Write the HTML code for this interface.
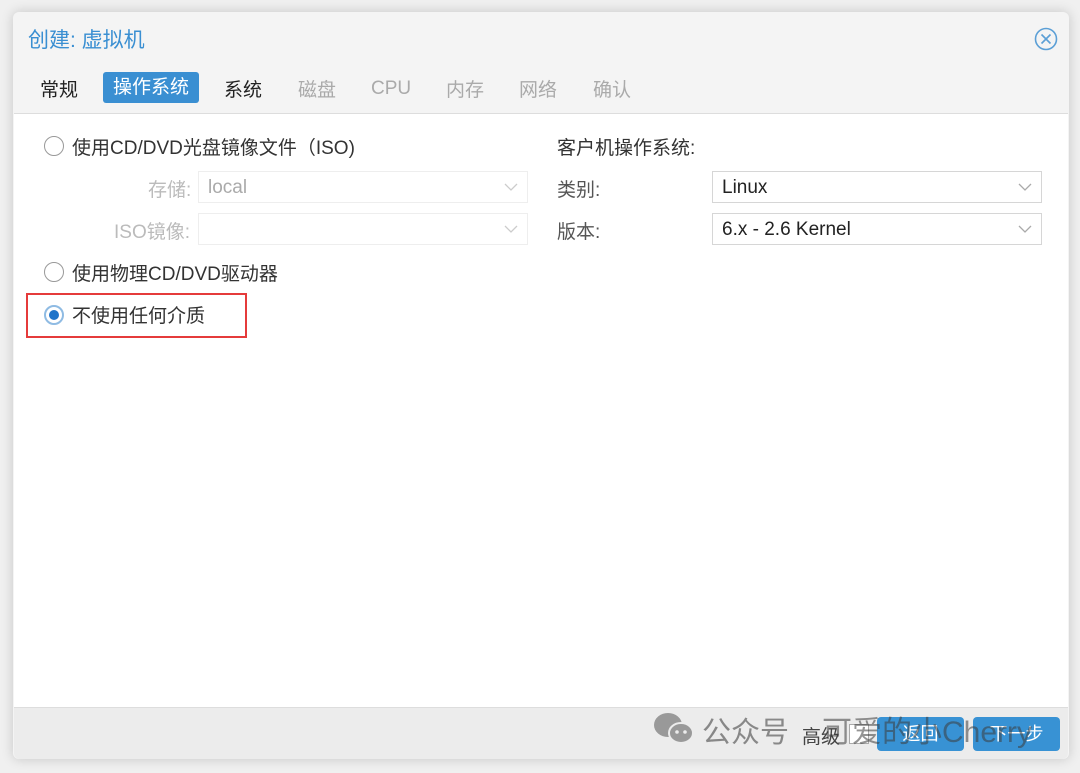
<!DOCTYPE html>
<html><head><meta charset="utf-8"><style>
body{margin:0;width:1080px;height:773px;background:#f0f0f0;overflow:hidden;position:relative;font-family:"Liberation Sans","Noto Sans CJK SC",sans-serif;}
.a{position:absolute;white-space:nowrap}
#dlg{position:absolute;left:13px;top:12px;width:1056px;height:747px;background:#f4f4f4;border-radius:6px;box-shadow:0 0 12px rgba(0,0,0,.18);}
.sel{position:absolute;height:32px;border:1px solid #d6d6d6;background:#fff;box-sizing:border-box;font-size:19px;line-height:32px;padding-left:9px;color:#222}
.sel svg{position:absolute;right:9px;top:10px}
.radio{position:absolute;width:20px;height:20px;border-radius:50%;border:1px solid #999;box-sizing:border-box;background:#fff}
.btn{position:absolute;top:717px;height:34px;background:#3892d4;border-radius:4px;color:#fff;font-size:18px;line-height:34px;text-align:center}
</style></head><body>
<div id="dlg"></div>
<div class="a" style="left:28px;top:24px;font-size:21px;color:#3a8fd2">创建: 虚拟机</div>
<svg class="a" style="left:1034px;top:27px" width="24" height="24" viewBox="0 0 24 24"><circle cx="12" cy="12" r="10.5" fill="none" stroke="#5b9fd6" stroke-width="1.6"/><path d="M7.5 7.5l9 9M16.5 7.5l-9 9" stroke="#5b9fd6" stroke-width="1.6"/></svg>
<div class="a" style="left:40px;top:75px;font-size:19px;color:#222">常规</div>
<div class="a" style="left:103px;top:72px;width:96px;height:31px;background:#3a8fd2;border-radius:3px;color:#fff;font-size:19px;line-height:31px;text-align:center">操作系统</div>
<div class="a" style="left:224px;top:75px;font-size:19px;color:#222">系统</div>
<div class="a" style="left:298px;top:75px;font-size:19px;color:#aaa">磁盘</div>
<div class="a" style="left:371px;top:78px;font-size:19px;color:#aaa">CPU</div>
<div class="a" style="left:446px;top:75px;font-size:19px;color:#aaa">内存</div>
<div class="a" style="left:519px;top:75px;font-size:19px;color:#aaa">网络</div>
<div class="a" style="left:593px;top:75px;font-size:19px;color:#aaa">确认</div>
<div class="a" style="left:14px;top:113px;width:1054px;height:594px;background:#fff;border-top:1px solid #ddd"></div>
<div class="radio" style="left:44px;top:136px"></div>
<div class="a" style="left:72px;top:133px;font-size:19px;color:#333">使用CD/DVD光盘镜像文件（ISO)</div>
<div class="a" style="left:148px;top:175px;font-size:19px;color:#bbb">存储:</div>
<div class="sel" style="left:198px;top:171px;width:330px;color:#aaa;border-color:#eee">local<svg width="14" height="10"><path d="M1 2l6 6 6-6" fill="none" stroke="#ccc" stroke-width="1.3"/></svg></div>
<div class="a" style="left:114px;top:217px;font-size:19px;color:#bbb">ISO镜像:</div>
<div class="sel" style="left:198px;top:213px;width:330px;border-color:#eee"><svg width="14" height="10"><path d="M1 2l6 6 6-6" fill="none" stroke="#ccc" stroke-width="1.3"/></svg></div>
<div class="radio" style="left:44px;top:262px"></div>
<div class="a" style="left:72px;top:259px;font-size:19px;color:#333">使用物理CD/DVD驱动器</div>
<div class="a" style="left:26px;top:293px;width:221px;height:45px;border:2px solid #e53b3b;box-sizing:border-box"></div>
<div class="radio" style="left:44px;top:305px;border:2px solid #8fbbe3;"><div style="position:absolute;left:3px;top:3px;width:10px;height:10px;border-radius:50%;background:#1f74c9"></div></div>
<div class="a" style="left:72px;top:301px;font-size:19px;color:#333">不使用任何介质</div>
<div class="a" style="left:557px;top:133px;font-size:19px;color:#333">客户机操作系统:</div>
<div class="a" style="left:557px;top:175px;font-size:19px;color:#555">类别:</div>
<div class="sel" style="left:712px;top:171px;width:330px">Linux<svg width="14" height="10"><path d="M1 2l6 6 6-6" fill="none" stroke="#aaa" stroke-width="1.3"/></svg></div>
<div class="a" style="left:557px;top:217px;font-size:19px;color:#555">版本:</div>
<div class="sel" style="left:712px;top:213px;width:330px">6.x - 2.6 Kernel<svg width="14" height="10"><path d="M1 2l6 6 6-6" fill="none" stroke="#aaa" stroke-width="1.3"/></svg></div>
<div class="a" style="left:14px;top:707px;width:1054px;height:51px;background:#ececec;border-top:1px solid #ddd;border-radius:0 0 6px 6px"></div>
<svg class="a" style="left:652px;top:711px" width="44" height="36" viewBox="0 0 44 36"><ellipse cx="16" cy="14" rx="14" ry="12" fill="#999"/><ellipse cx="29" cy="22" rx="12" ry="10" fill="#999" stroke="#ececec" stroke-width="2"/><circle cx="25" cy="21" r="1.8" fill="#ececec"/><circle cx="33" cy="21" r="1.8" fill="#ececec"/></svg>
<div class="a" style="left:702px;top:709px;font-size:29px;color:#888">公众号</div>
<div class="a" style="left:802px;top:722px;font-size:19px;color:#444">高级</div>
<div class="a" style="left:849px;top:724px;width:18px;height:18px;background:#fff;border:1px solid #aaa"></div>
<div class="btn" style="left:877px;width:87px">返回</div>
<div class="btn" style="left:973px;width:87px">下一步</div>
<div class="a" style="left:822px;top:707px;font-size:30px;color:rgba(60,60,60,.55)">可爱的小Cherry</div>
</body></html>
